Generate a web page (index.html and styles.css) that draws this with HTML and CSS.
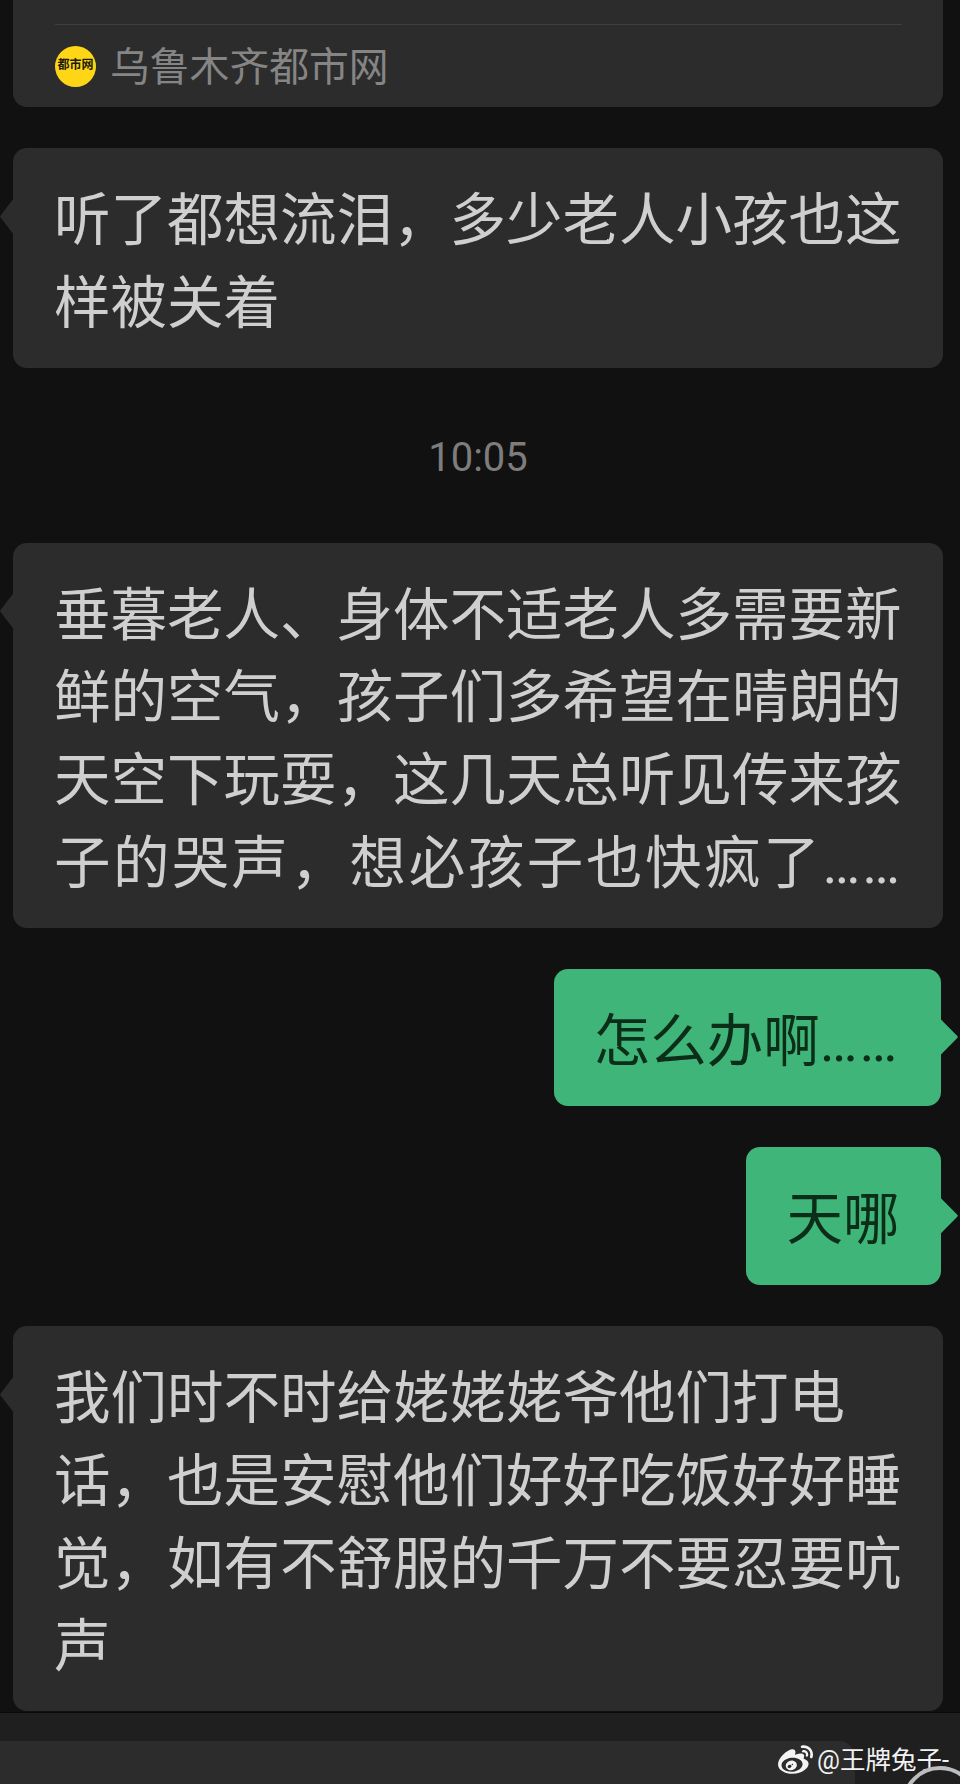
FILE: index.html
```html
<!DOCTYPE html>
<html lang="zh-CN">
<head>
    <meta charset="UTF-8">
    <title>聊天</title>
    <link rel="stylesheet" href="styles.css">
</head>
<body>
    <main class="chat">
        <section class="card">
            <div class="card-source">
                <span class="source-logo">都市网</span>
                <span class="source-name">乌鲁木齐都市网</span>
            </div>
        </section>

        <div class="bubble in">听了都想流泪，多少老人小孩也这样被关着</div>

        <div class="time">10:05</div>

        <div class="bubble in">
            垂暮老人、身体不适老人多需要新鲜的空气，孩子们多希望在晴朗的天空下玩耍，这几天总听见传来孩
            <div class="justified">子的哭声，想必孩子也快疯了<span class="dots">……</span></div>
        </div>

        <div class="bubble out">怎么办啊<span class="dots">……</span></div>
        <div class="bubble out">天哪</div>

        <div class="bubble in">我们时不时给姥姥姥爷他们打电话，也是安慰他们好好吃饭好好睡觉，如有不舒服的千万不要忍要吭声</div>
    </main>

    <footer class="footer">
        <div class="input-box"></div>
        <div class="watermark">
            <svg class="weibo" viewBox="0 0 24 24" aria-hidden="true">
                <path d="M10.098 20.323c-3.977.391-7.414-1.406-7.672-4.02-.259-2.609 2.759-5.047 6.74-5.441 3.979-.394 7.413 1.404 7.671 4.018.259 2.6-2.759 5.049-6.737 5.439l-.002.004zM9.05 17.219c-.384.616-1.208.884-1.829.602-.612-.279-.793-.991-.406-1.593.379-.595 1.176-.861 1.793-.601.622.263.82.972.442 1.592zm1.27-1.627c-.141.237-.449.353-.689.253-.236-.09-.313-.361-.177-.586.138-.227.436-.346.672-.24.239.09.315.36.18.601l.014-.028zm.176-2.719c-1.893-.493-4.033.45-4.857 2.118-.836 1.704-.026 3.591 1.886 4.21 1.983.64 4.318-.341 5.132-2.179.8-1.793-.201-3.642-2.161-4.149zm7.563-1.224c-.346-.105-.57-.18-.405-.615.375-.977.42-1.804 0-2.404-.781-1.112-2.915-1.053-5.364-.03 0 0-.766.331-.571-.271.376-1.217.315-2.224-.27-2.809-1.338-1.337-4.869.045-7.888 3.08C1.309 10.87 0 13.273 0 15.348c0 3.981 5.099 6.395 10.086 6.395 6.536 0 10.888-3.801 10.888-6.82 0-1.822-1.547-2.854-2.915-3.284v.01zm1.908-5.092c-.766-.856-1.908-1.187-2.96-.962-.436.09-.706.511-.616.932.09.42.511.691.932.602.511-.105 1.067.044 1.442.465.376.421.466.977.316 1.473-.136.406.089.856.51.992.405.119.857-.105.992-.512.33-1.021.12-2.178-.646-3.035l.03.045zm2.418-2.195c-1.576-1.757-3.905-2.419-6.054-1.968-.496.104-.812.587-.706 1.081.104.496.586.813 1.082.707 1.532-.331 3.185.15 4.296 1.383 1.112 1.246 1.429 2.943.947 4.416-.165.48.106 1.007.586 1.157.479.165.991-.104 1.157-.586.675-2.088.241-4.478-1.338-6.235l.03.045z"/>
            </svg>
            <span>@王牌兔子-</span>
        </div>
        <div class="round-button"></div>
    </footer>
</body>
</html>
```

FILE: styles.css
```css
* {
    box-sizing: border-box;
}

body {
    display: flex;
    flex-direction: column;
    margin: 0;
    height: 1784px;
    overflow: hidden;
    background: #111111;
    font-family: Roboto, "Noto Sans CJK SC", sans-serif;
}

.chat {
    display: flex;
    flex-direction: column;
    gap: 41px;
    padding: 0 17px 1px 13px;
}

/* Shared article card, its top is scrolled off */
.card {
    height: 107px;
    padding: 24px 41px 0 42px;
    background: #2c2c2c;
    border-radius: 0 0 14px 14px;
}

.card-source {
    display: flex;
    align-items: center;
    gap: 14px;
    height: 83px;
    border-top: 1px solid #3e3e3e;
}

.source-logo {
    width: 41px;
    height: 41px;
    border-radius: 50%;
    background: #ffd615;
    color: #1c1a08;
    font-size: 12px;
    font-weight: 700;
    line-height: 39px;
    text-align: center;
    white-space: nowrap;
}

.source-name {
    padding-top: 3px;
    color: #858585;
    font-size: 39.8px;
    line-height: 48px;
}

.time {
    height: 93px;
    padding-top: 3px;
    color: #7d7d7d;
    font-size: 40px;
    line-height: 92px;
    text-align: center;
}

.bubble {
    position: relative;
    padding: 32px 41px 22px 41px;
    border-radius: 14px;
    font-size: 56.5px;
    line-height: 82.75px;
}

.bubble::after {
    content: "";
    position: absolute;
    top: 50px;
    height: 37px;
}

.justified {
    text-align: justify;
    text-align-last: justify;
}

.dots {
    letter-spacing: 2px;
}

.in {
    background: #2c2c2c;
    color: #cfcfcf;
}

.in::after {
    left: -13px;
    width: 14px;
    background: #2c2c2c;
    clip-path: polygon(100% 0, 8% 45%, 0 50%, 8% 55%, 100% 100%);
}

.out {
    align-self: flex-end;
    margin-right: 2px;
    padding: 32px 41.6px 23px 40px;
    background: #3fb579;
    color: #0c2e18;
}

.out::after {
    right: -17px;
    width: 18px;
    background: #3fb579;
    clip-path: polygon(0 0, 92% 45%, 100% 50%, 92% 55%, 0 100%);
}

.footer {
    position: relative;
    display: flex;
    flex: 1;
    padding-top: 28px;
    background: #1f1f1f;
    border-top: 1px solid #090909;
}

.input-box {
    width: 855px;
    background: #2c2c2c;
    border-top-right-radius: 16px;
}

/* Sits over the input row */
.watermark {
    position: absolute;
    top: 29px;
    left: 778px;
    display: flex;
    align-items: center;
    gap: 4px;
    color: #f2f2f2;
    font-size: 25.5px;
    line-height: 32px;
    white-space: nowrap;
}

.weibo {
    width: 35px;
    height: 35px;
    fill: #f4f4f4;
}

.round-button {
    position: absolute;
    top: 53px;
    left: 902px;
    width: 76px;
    height: 76px;
    border: 4px solid #bdbdbd;
    border-radius: 50%;
}
```
